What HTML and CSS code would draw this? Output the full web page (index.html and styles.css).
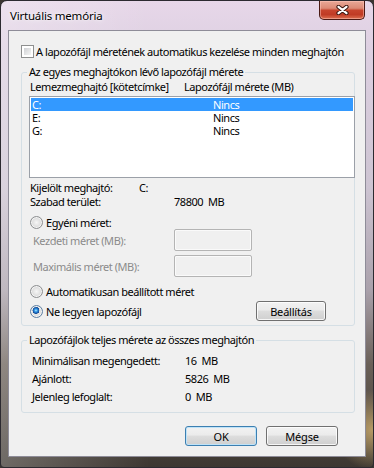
FILE: index.html
```html
<!DOCTYPE html>
<html lang="hu">
<head>
  <meta charset="UTF-8" />
  <title>Virtuális memória</title>
  <link rel="stylesheet" href="styles.css">
</head>
<body>
  <div class="window">
    <div class="titlebar">
      <span class="title">Virtuális memória</span>
      <button class="close" aria-label="Bezárás">
        <svg width="13" height="10" viewBox="0 0 13 10">
          <path d="M2.5 1.8 L10.5 8.2 M10.5 1.8 L2.5 8.2" stroke="#3b1711" stroke-width="4.2" stroke-linecap="round" fill="none" />
          <path d="M2.5 1.8 L10.5 8.2 M10.5 1.8 L2.5 8.2" stroke="#fff" stroke-width="2.2" stroke-linecap="round" fill="none" />
        </svg>
      </button>
    </div>

    <div class="client">
      <label class="check-row">
        <span class="checkbox"></span>
        A lapozófájl méretének automatikus kezelése minden meghajtón
      </label>

      <fieldset class="group drives">
        <legend>Az egyes meghajtókon lévő lapozófájl mérete</legend>

        <div class="list-head">
          <span class="head-drive">Lemezmeghajtó [kötetcímke]</span>
          <span>Lapozófájl mérete (MB)</span>
        </div>

        <ul class="listbox">
          <li class="selected"><span class="col-drive">C:</span><span>Nincs</span></li>
          <li><span class="col-drive">E:</span><span>Nincs</span></li>
          <li><span class="col-drive">G:</span><span>Nincs</span></li>
        </ul>

        <div class="info-row first">
          <span class="info-label drive-label">Kijelölt meghajtó:</span>
          <span>C:</span>
        </div>
        <div class="info-row">
          <span class="info-label free-label">Szabad terület:</span>
          <span>78800  MB</span>
        </div>

        <label class="radio-row custom">
          <span class="radio"></span>
          Egyéni méret:
        </label>
        <div class="size-row">
          <span class="size-label">Kezdeti méret (MB):</span>
          <input class="size-input" type="text" disabled />
        </div>
        <div class="size-row second">
          <span class="size-label">Maximális méret (MB):</span>
          <input class="size-input" type="text" disabled />
        </div>

        <label class="radio-row auto">
          <span class="radio"></span>
          Automatikusan beállított méret
        </label>
        <div class="radio-row none">
          <span class="radio checked"></span>
          Ne legyen lapozófájl
          <button class="btn set-btn">Beállítás</button>
        </div>
      </fieldset>

      <fieldset class="group totals">
        <legend>Lapozófájlok teljes mérete az összes meghajtón</legend>
        <div class="total-row">
          <span class="total-label">Minimálisan megengedett:</span>
          <span>16  MB</span>
        </div>
        <div class="total-row">
          <span class="total-label">Ajánlott:</span>
          <span>5826  MB</span>
        </div>
        <div class="total-row">
          <span class="total-label">Jelenleg lefoglalt:</span>
          <span>0  MB</span>
        </div>
      </fieldset>

      <div class="buttons">
        <button class="btn default">OK</button>
        <button class="btn">Mégse</button>
      </div>
    </div>
  </div>
</body>
</html>
```

FILE: styles.css
```css
* {
  box-sizing: border-box;
}

html,
body {
  margin: 0;
}

body {
  width: 374px;
  height: 468px;
  overflow: hidden;
  background: #3b3631;
  font-family: "Noto Sans", sans-serif;
  font-size: 11px;
  letter-spacing: -0.45px;
  color: #000;
  white-space: nowrap;
}

.window {
  height: 468px;
  display: flex;
  flex-direction: column;
  padding: 0 7px 10px;
  border: 1px solid #2c2a30;
  border-radius: 7px 7px 4px 4px;
  background:
    radial-gradient(circle at 100% 92%, rgba(196, 165, 105, 0.9) 0, rgba(196, 165, 105, 0) 40px),
    linear-gradient(to right, rgba(255, 255, 255, 0.25), rgba(255, 255, 255, 0) 40%),
    linear-gradient(to bottom, #e7d7e9 0, #dccfe0 12%, #cdc4d2 40%, #aaa1ab 62%, #6a6058 78%, #3d3731 100%);
}

/* title bar */
.titlebar {
  height: 29px;
  margin: 0 -7px;
  display: flex;
  align-items: flex-start;
}

.title {
  margin: 8px 0 0 9px;
  line-height: 14px;
  font-size: 11.5px;
  letter-spacing: -0.2px;
  text-shadow: 0 0 6px rgba(255, 255, 255, 0.9), 0 0 2px #fff;
}

.close {
  margin-left: auto;
  margin-right: 8px;
  width: 46px;
  height: 19px;
  padding: 0;
  display: flex;
  align-items: center;
  justify-content: center;
  border: 1px solid #4a1a14;
  border-top: none;
  border-radius: 0 0 5px 5px;
  background: linear-gradient(to bottom, #e9a897 0, #dc8a76 40%, #c7442d 52%, #c03b25 75%, #dc6f50 100%);
  box-shadow: inset 0 0 0 1px rgba(255, 200, 190, 0.5);
}

/* client area */
.client {
  flex: 1;
  display: flex;
  flex-direction: column;
  background: #f0f0f0;
  border: 1px solid #8e8c98;
}

.check-row {
  margin: 13px 0 0 12px;
  height: 14px;
  display: flex;
  align-items: center;
  gap: 2px;
}

.checkbox {
  width: 13px;
  height: 13px;
  padding: 2px;
  border: 1px solid #8e8f8f;
  background: linear-gradient(135deg, #cfd1d4, #f5f5f5) content-box, #fff;
}

.group {
  width: 334px;
  min-width: 0;
  margin: 7px 0 0 12px;
  border: 1px solid #d5dfe5;
  border-radius: 3px;
}

.group legend {
  padding: 0 2px;
  margin-left: -2px;
  line-height: 14px;
}

.drives {
  padding: 1px 0 4px 7px;
}

.list-head {
  display: flex;
  height: 14px;
  line-height: 14px;
  padding-left: 1px;
}

.head-drive {
  width: 154px;
}

.listbox {
  list-style: none;
  margin: 2px -1px 0 0;
  padding: 1px;
  height: 82px;
  background: #fff;
  border: 1px solid #9ba0a8;
}

.listbox li {
  display: flex;
  height: 13px;
  line-height: 13px;
  padding-left: 1px;
}

.listbox li.selected {
  background: #3399ff;
  color: #fff;
}

.col-drive {
  width: 181px;
}

.info-row {
  display: flex;
  height: 14px;
  line-height: 14px;
  padding-left: 1px;
  white-space: pre;
}

.info-row.first {
  margin-top: 3px;
}

.drive-label {
  width: 109px;
}

.free-label {
  width: 144px;
}

.radio-row {
  display: flex;
  align-items: center;
  gap: 3px;
  padding-left: 1px;
  height: 14px;
}

.radio-row.custom {
  margin-top: 7px;
  height: 13px;
}

.radio-row.auto {
  margin-top: 7px;
}

.radio-row.none {
  margin-top: 3px;
  height: 20px;
}

.radio {
  width: 13px;
  height: 13px;
  flex: none;
  border-radius: 50%;
  border: 1px solid #8d8f91;
  background: radial-gradient(circle at 50% 50%, #f6f6f6 0, #e2e2e2 45%, #c9cacb 100%);
  box-shadow: inset 0 0 0 1px rgba(255, 255, 255, 0.7);
}

.radio.checked {
  border-color: #5d7fa3;
  background:
    radial-gradient(circle at 45% 40%, #b9ecff 0, #3ea6ec 1.2px, #1a5fb4 2.6px, #174f94 3.3px, rgba(255, 255, 255, 0) 3.6px),
    radial-gradient(circle at 50% 50%, #f6f6f6 0, #e2e2e2 45%, #c9cacb 100%);
}

.size-row {
  display: flex;
  align-items: center;
  height: 22px;
  padding-left: 4px;
  color: #8b8b8b;
}

.size-row.second {
  margin-top: 4px;
}

.size-label {
  width: 141px;
}

.size-input {
  width: 78px;
  height: 22px;
  border: 1px solid #b4b4b4;
  border-radius: 2px;
  background: #f0f0f0;
  box-shadow: inset 0 0 0 1px #fafafa;
}

.btn {
  width: 72px;
  height: 20px;
  padding: 0;
  font-family: inherit;
  font-size: 11px;
  letter-spacing: -0.2px;
  color: #000;
  border: 1px solid #707070;
  border-radius: 3px;
  background: linear-gradient(to bottom, #f2f2f2 0, #ebebeb 45%, #dddddd 50%, #cfcfcf 100%);
  box-shadow: inset 0 0 0 1px rgba(255, 255, 255, 0.8);
}

.set-btn {
  width: 70px;
  margin-left: auto;
  margin-right: 28px;
}

.btn.default {
  border-color: #3c7fb1;
  box-shadow: inset 0 0 0 1px #bfe3f8;
}

.totals {
  padding: 5px 0 6px 7px;
}

.total-row {
  display: flex;
  height: 18px;
  line-height: 18px;
  padding-left: 3px;
  white-space: pre;
}

.total-label {
  width: 153px;
}

.buttons {
  display: flex;
  justify-content: flex-end;
  gap: 9px;
  margin: 13px 27px 0 0;
}
```
